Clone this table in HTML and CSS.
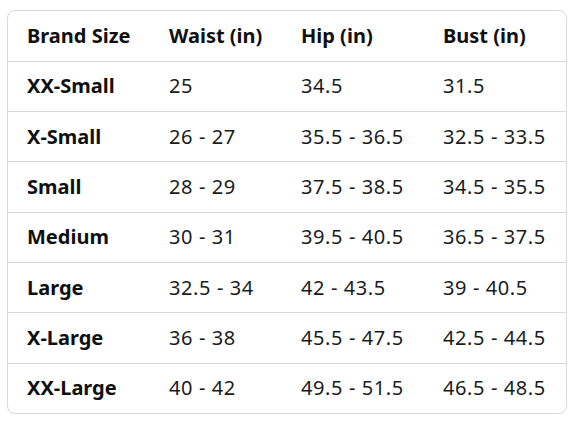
FILE: index.html
```html
<!DOCTYPE html>
<html>
<head>
<meta charset="utf-8">
<link rel="stylesheet" href="styles.css">
</head>
<body>
<div class="card">
<table class="size-table">
<thead>
<tr><th class="c1">Brand Size</th><th class="c2">Waist (in)</th><th class="c3">Hip (in)</th><th class="c4">Bust (in)</th></tr>
</thead>
<tbody>
<tr><th>XX-Small</th><td>25</td><td>34.5</td><td>31.5</td></tr>
<tr><th>X-Small</th><td>26 - 27</td><td>35.5 - 36.5</td><td>32.5 - 33.5</td></tr>
<tr><th>Small</th><td>28 - 29</td><td>37.5 - 38.5</td><td>34.5 - 35.5</td></tr>
<tr><th>Medium</th><td>30 - 31</td><td>39.5 - 40.5</td><td>36.5 - 37.5</td></tr>
<tr><th>Large</th><td>32.5 - 34</td><td>42 - 43.5</td><td>39 - 40.5</td></tr>
<tr><th>X-Large</th><td>36 - 38</td><td>45.5 - 47.5</td><td>42.5 - 44.5</td></tr>
<tr><th>XX-Large</th><td>40 - 42</td><td>49.5 - 51.5</td><td>46.5 - 48.5</td></tr>
</tbody>
</table>
</div>
</body>
</html>
```
FILE: styles.css
```css
html, body {
  margin: 0;
  padding: 0;
  background: #ffffff;
}
body {
  padding: 10px 0 0 7px;
  font-family: "Noto Sans", "Open Sans", sans-serif;
  color: #0f1111;
}
.card {
  width: 558px;
  border: 1px solid #d5d9d9;
  border-radius: 8px;
  overflow: hidden;
}
.size-table {
  width: 100%;
  border-collapse: collapse;
  table-layout: fixed;
}
.size-table th,
.size-table td {
  box-sizing: border-box;
  height: 50.3px;
  padding: 0 0 1px 19px;
  text-align: left;
  font-size: 20px;
  vertical-align: middle;
  white-space: nowrap;
}
.size-table th {
  font-weight: 700;
}
.size-table td {
  font-weight: 400;
  letter-spacing: 0.6px;
  color: #1a1c1c;
}
.size-table tbody th,
.size-table tbody td {
  border-top: 1px solid #d5d9d9;
}
.c1 { width: 142px; }
.c2 { width: 132px; }
.c3 { width: 142px; }
.c4 { width: 142px; }
```
